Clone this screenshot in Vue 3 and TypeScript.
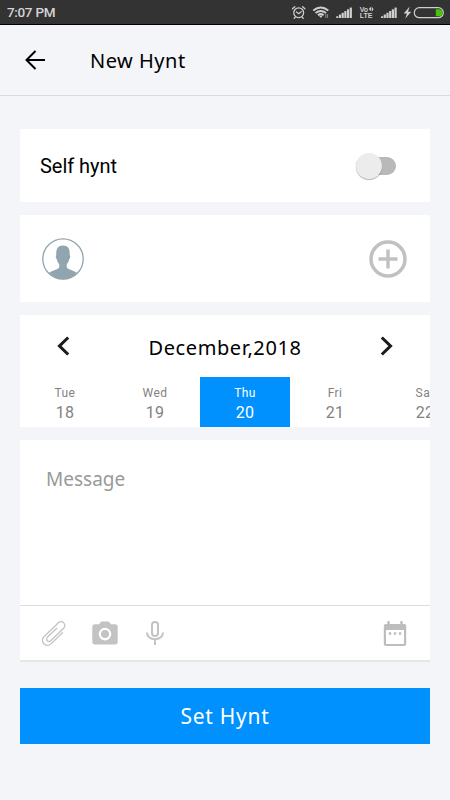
<script setup lang="ts">
import { ref } from 'vue'

interface Day {
  name: string
  date: number
}

const days: Day[] = [
  { name: 'Tue', date: 18 },
  { name: 'Wed', date: 19 },
  { name: 'Thu', date: 20 },
  { name: 'Fri', date: 21 },
  { name: 'Sat', date: 22 },
]
const selected = ref<number>(20)
const selfHynt = ref<boolean>(false)
const signalBars: number[] = [0, 1, 2, 3, 4, 5]
</script>

<template>
  <div class="screen">
    <div class="status">
      <span class="time">7:07 PM</span>
      <svg class="status-icons" width="160" height="24" viewBox="0 0 160 24" fill="none" stroke="#cfcfcf">
        <g stroke-width="1.3" stroke-linecap="round">
          <circle cx="8.7" cy="12.7" r="4.9" />
          <path d="M6.5 12l2.200 1.700 2.500-2M2.500 8.800l2.300-2M14.900 8.800l-2.300-2M5.200 17.200l-1 1M12.200 17.200l1 1" />
        </g>
        <g stroke-width="1.9">
          <path d="M23.300 10.500Q30.800 4.300 38.300 10.500M25.600 13Q30.800 8.800 36 13M28 15.200Q30.800 13 33.600 15.200" />
          <path d="M28.800 15.600h4L30.800 18z" fill="#cfcfcf" stroke="none" />
          <path d="M35.800 14v4M37.600 14v4" stroke="#8c8c8c" stroke-width="1" />
        </g>
        <g fill="#cfcfcf" stroke="none">
          <rect v-for="i in signalBars" :key="'a' + i" :x="46.2 + i * 2.7" :y="16.3 - i * 1.75" width="2.2" :height="1.7 + i * 1.75" />
          <rect v-for="i in signalBars" :key="'b' + i" :x="91 + i * 2.7" :y="16.3 - i * 1.75" width="2.2" :height="1.7 + i * 1.75" />
          <text x="69.700" y="11.700" class="volte">Vo</text>
          <path d="M81.300 6.500v5l-2.500-2.500zM82 7v4.500l1.500-2.300z" />
          <text x="69.700" y="18.300" class="volte">LTE</text>
          <path d="M129 6.500l-6 7h3.200l-1.700 5.200 6-7h-3.200z" transform="translate(-2.500)" class="bolt" />
        </g>
        <rect x="134.500" y="7.700" width="29" height="10" rx="5" stroke-width="1.200" class="battery" />
        <path d="M156 9.200h3.200a3.400 3.400 0 0 1 0 7H156z" fill="#44c506" stroke="none" class="battery" />
      </svg>
    </div>

    <header class="header">
      <svg width="22" height="20" viewBox="0 0 22 20" fill="none" stroke="#000" stroke-width="2">
        <path d="M10.500 1L1.500 10l9 9M1.500 10h18.500" />
      </svg>
      <h1 class="title">New Hynt</h1>
    </header>

    <main class="content">
      <section class="card self">
        <span class="self-label">Self hynt</span>
        <button class="switch" :class="{ on: selfHynt }" aria-label="Self hynt" @click="selfHynt = !selfHynt">
          <span class="thumb"></span>
        </button>
      </section>

      <section class="card people">
        <svg width="42" height="42" viewBox="0 0 42 42">
          <circle cx="21" cy="21" r="20.200" fill="#fff" stroke="#91a5ae" stroke-width="1.300" />
          <path
            d="M7 34.800C9.500 33 15 31.300 16.500 30.200c1-.8 1-3 .6-4.300-1.200-1.100-1.900-2.800-2.200-4.700-1-.4-1.600-3.500-.6-4-.4-6 1.300-9.700 6.700-9.700s7.100 3.700 6.700 9.700c1 .5.4 3.600-.6 4-.3 1.900-1 3.600-2.200 4.700-.4 1.300-.4 3.500.6 4.300 1.500 1.100 7 2.800 9.500 4.600Q29 41.300 21 41.300T7 34.800z"
            fill="#91a5ae"
          />
        </svg>
        <svg width="38" height="38" viewBox="0 0 38 38" fill="none" stroke="#c1c1c1">
          <circle cx="19" cy="19" r="17" stroke-width="3.500" />
          <path d="M19 9.500v19M9.500 19h19" stroke-width="3.400" />
        </svg>
      </section>

      <section class="card calendar">
        <div class="month-row">
          <svg width="13" height="20" viewBox="0 0 13 20" fill="none" stroke="#1c1c1c" stroke-width="3.100">
            <path d="M11.200 1.500L2.500 10l8.700 8.500" />
          </svg>
          <span class="month">December,2018</span>
          <svg width="13" height="20" viewBox="0 0 13 20" fill="none" stroke="#1c1c1c" stroke-width="3.100">
            <path d="M1.800 1.500L10.500 10l-8.700 8.500" />
          </svg>
        </div>
        <div class="days">
          <div
            v-for="day in days"
            :key="day.date"
            class="day"
            :class="{ active: day.date === selected }"
            @click="selected = day.date"
          >
            <span class="day-name">{{ day.name }}</span>
            <span class="day-date">{{ day.date }}</span>
          </div>
        </div>
      </section>

      <section class="card message">
        <div class="message-body">Message</div>
        <div class="tools">
          <svg width="26" height="26" viewBox="0 0 26 26" fill="none" stroke="#c3c3c3" stroke-width="1.300" stroke-linecap="round">
            <path
              transform="translate(12.300 13.700) rotate(46)"
              d="M5-6.500V9.500A5 5 0 0 1-5 9.500V-10.500A3.800 3.800 0 0 1 2.600-10.500V7.500A2.400 2.400 0 0 1-2.200 7.500V-5.500"
            />
          </svg>
          <svg width="26" height="26" viewBox="0 0 26 26">
            <path
              fill="#c3c3c3"
              fill-rule="evenodd"
              d="M9.300 1.500h7.400l2.300 2.700h4.200q2.500 0 2.500 2.500v15.500q0 2.300-2.500 2.300H2.800Q.3 24.500.3 22.200V6.700q0-2.500 2.500-2.500H7zM13 7.800a6.300 6.300 0 1 0 0 12.600 6.300 6.300 0 0 0 0-12.600z"
            />
            <circle cx="13" cy="14.100" r="4" fill="#c3c3c3" />
          </svg>
          <svg width="26" height="26" viewBox="0 0 26 26" fill="none" stroke="#c3c3c3" stroke-width="2">
            <rect x="10" y="2" width="6" height="14" rx="3" />
            <path d="M5 12.500c0 9 16 9 16 0M13 19.300V25" />
          </svg>
          <svg class="date-icon" width="26" height="26" viewBox="0 0 26 26">
            <path
              fill="#bdbdbd"
              fill-rule="evenodd"
              d="M5.300 1h2.400v3h10.600V1h2.400v3h1.500q2 0 2 2v18q0 2-2 2H3.800q-2 0-2-2V6q0-2 2-2h1.500zM4 10v14h18V10z"
            />
            <path fill="#bdbdbd" d="M6.800 12.300h2.400v2.500H6.800zM11.800 12.300h2.400v2.500h-2.400zM16.800 12.300h2.400v2.500h-2.400z" />
          </svg>
        </div>
      </section>

      <button class="submit">Set Hynt</button>
    </main>
  </div>
</template>

<style>
body {
  background: #f4f5f8;
}
</style>

<style scoped>
.screen {
  box-sizing: border-box;
  width: 450px;
  height: 800px;
  overflow: hidden;
  background: #f4f5f8;
  font-family: 'Noto Sans', sans-serif;
  color: #000;
}
.status {
  box-sizing: border-box;
  height: 25px;
  display: flex;
  justify-content: space-between;
  background: #333;
  border-bottom: 1px solid #000;
}
.time {
  padding-left: 7px;
  font: 500 13px/25px Roboto, sans-serif;
  letter-spacing: -0.4px;
  word-spacing: 0.5px;
  color: #d5d5d5;
}
.time {
  font-size: 13.5px;
}
.status-icons {
  flex: none;
}
.battery {
  transform: translateX(-10.2px);
}
.bolt {
  transform: translateX(-9.3px);
}
.volte {
  font: 700 7px 'Liberation Sans', sans-serif;
}
.header {
  box-sizing: border-box;
  height: 71px;
  display: flex;
  align-items: center;
  padding-left: 25px;
  border-bottom: 1px solid #d9dadd;
}
.title {
  margin: 0 0 0 43px;
  padding-top: 2px;
  font-size: 20px;
  font-weight: 400;
  line-height: 28px;
  letter-spacing: 0.5px;
}
.content {
  display: flex;
  flex-direction: column;
  padding: 33px 20px 0;
}
.card {
  box-sizing: border-box;
  background: #fff;
  margin-bottom: 13px;
}
.self {
  height: 73px;
  display: flex;
  align-items: center;
  justify-content: space-between;
  padding: 0 34px 0 20px;
}
.self-label {
  font: 400 20px/24px Roboto, sans-serif;
  letter-spacing: -0.05px;
}
.switch {
  width: 40px;
  height: 18px;
  padding: 0;
  border: 0;
  display: flex;
  align-items: center;
  border-radius: 9px;
  background: #b9b9b9;
}
.switch.on {
  justify-content: flex-end;
}
.thumb {
  width: 26px;
  height: 26px;
  flex: none;
  border-radius: 50%;
  background: #ececec;
  box-shadow: 0 1px 1px rgba(0, 0, 0, 0.3);
}
.people {
  height: 87px;
  display: flex;
  align-items: center;
  justify-content: space-between;
  padding: 0 23.5px 0 21.5px;
}
.calendar {
  height: 112px;
  overflow: hidden;
}
.month-row {
  height: 62px;
  display: flex;
  align-items: center;
  justify-content: space-between;
  padding: 0 37px;
}
.month {
  font-size: 20px;
  letter-spacing: 0.6px;
  padding-top: 2px;
}
.days {
  display: flex;
  height: 50px;
}
.day {
  flex: 0 0 90px;
  box-sizing: border-box;
  display: flex;
  flex-direction: column;
  align-items: center;
  padding-top: 8px;
  font-family: Roboto, sans-serif;
  color: #828282;
}
.day-name {
  font-size: 12px;
  line-height: 16px;
  letter-spacing: 0.4px;
}
.day-date {
  font-size: 16px;
  line-height: 23px;
  letter-spacing: 0.3px;
}
.day.active {
  background: #0091ff;
  color: #fff;
}
.message {
  height: 222px;
  border-bottom: 2px solid #e6e6e6;
  margin-bottom: 26px;
}
.message-body {
  box-sizing: border-box;
  height: 165px;
  padding: 25px 26px;
  font-size: 19px;
  line-height: 28px;
  color: #999;
}
.tools {
  box-sizing: border-box;
  height: 55px;
  display: flex;
  align-items: center;
  gap: 24px;
  padding: 0 22px;
  border-top: 1px solid #dcdcdc;
}
.date-icon {
  margin-left: auto;
}
.submit {
  height: 56px;
  border: 0;
  padding: 0;
  background: #0091ff;
  color: #fff;
  font: 400 21px 'Noto Sans', sans-serif;
  letter-spacing: 0.7px;
}
</style>
